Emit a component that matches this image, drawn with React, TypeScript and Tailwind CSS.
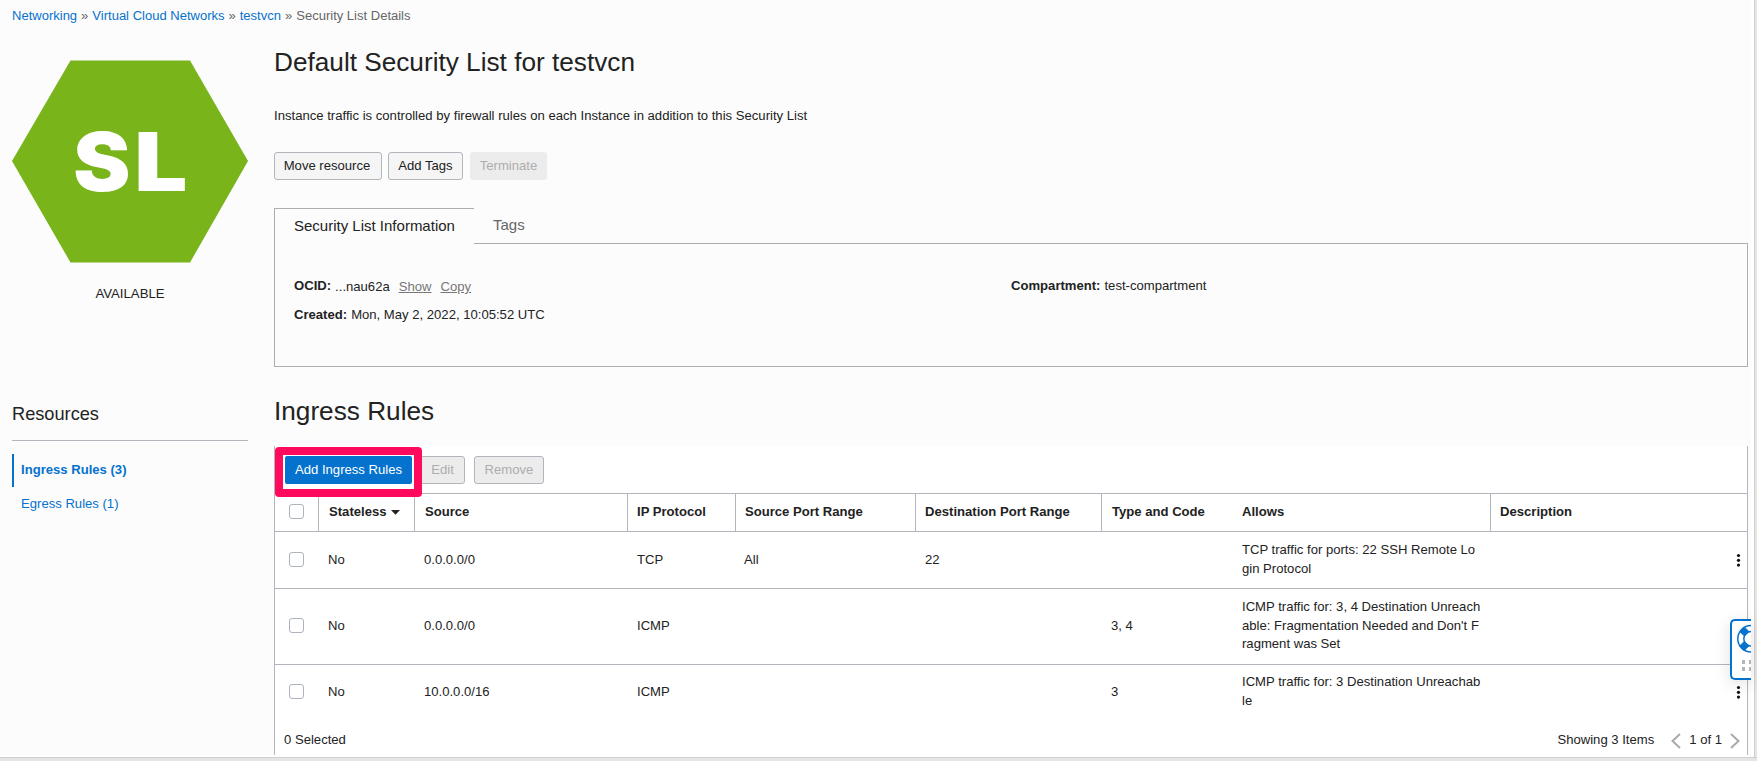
import React from "react";

const cols = "grid grid-cols-[44px_96px_213px_108px_180px_186px_130px_259px_1fr]";
const headBase = "flex items-center text-[13.1px] font-bold h-[37px] pb-px";
const headLine = " border-r border-[#b1b6bd]";

function Checkbox() {
  return <span className="mb-px block h-[15px] w-[15px] rounded-[3px] border border-[#aeb4bc] bg-white" />;
}

function Dots() {
  return (
    <svg width="5" height="14" viewBox="0 0 5 14" fill="#111">
      <circle cx="2.5" cy="2.5" r="1.6" />
      <circle cx="2.5" cy="7.3" r="1.6" />
      <circle cx="2.5" cy="12.1" r="1.6" />
    </svg>
  );
}

type Rule = { source: string; protocol: string; src: string; dst: string; code: string; allows: string[]; height: string };

const rules: Rule[] = [
  { source: "0.0.0.0/0", protocol: "TCP", src: "All", dst: "22", code: "", allows: ["TCP traffic for ports: 22 SSH Remote Lo", "gin Protocol"], height: "h-[57px] border-b" },
  { source: "0.0.0.0/0", protocol: "ICMP", src: "", dst: "", code: "3, 4", allows: ["ICMP traffic for: 3, 4 Destination Unreach", "able: Fragmentation Needed and Don't F", "ragment was Set"], height: "h-[76px] border-b pb-px" },
  { source: "10.0.0.0/16", protocol: "ICMP", src: "", dst: "", code: "3", allows: ["ICMP traffic for: 3 Destination Unreachab", "le"], height: "h-[54px]" },
];

function Row({ rule }: { rule: Rule }) {
  return (
    <div className={`${cols} ${rule.height} items-center border-[#b1b6bd] text-[13.1px]`}>
      <span className="pl-[14px]"><Checkbox /></span>
      <span className="pl-[9px]">No</span>
      <span className="pl-[9px]">{rule.source}</span>
      <span className="pl-[9px]">{rule.protocol}</span>
      <span className="pl-[8px]">{rule.src}</span>
      <span className="pl-[9px]">{rule.dst}</span>
      <span className="pl-[9px]">{rule.code}</span>
      <span className="pl-[10px] leading-[18.7px]">
        {rule.allows.map((line) => <span key={line} className="block whitespace-nowrap">{line}</span>)}
      </span>
      <span className="flex justify-end pr-[6px]"><Dots /></span>
    </div>
  );
}

export default function App() {
  return (
    <div className="relative flex h-[761px] w-[1757px] flex-col overflow-hidden bg-[#fcfcfc] font-['Liberation_Sans',Arial,sans-serif] text-[#222]">
      <nav className="flex h-[31px] shrink-0 items-center gap-1 pl-3 text-[13.03px] text-[#666]">
        <a className="text-[#0572ce]">Networking</a><span>»</span>
        <a className="text-[#0572ce]">Virtual Cloud Networks</a><span>»</span>
        <a className="text-[#0572ce]">testvcn</a><span>»</span>
        <span>Security List Details</span>
      </nav>

      <div className="flex h-[724px] shrink-0">
        <aside className="ml-3 flex w-[236px] shrink-0 flex-col">
          <svg className="mt-[29px] shrink-0" width="236" height="203" viewBox="0 0 236 203">
            <polygon points="58.5,0.5 178,0.5 236,101 178,202.5 58.5,202.5 0,101" fill="#78b41a" />
            <g fontFamily="Inter" fontWeight="900" fontSize="81" fill="#fff">
              <text transform="translate(61.3 131) scale(1.06 1)">S</text>
              <text transform="translate(122.3 131) scale(1.16 1)">L</text>
            </g>
          </svg>
          <div className="mt-[23px] text-center text-[13.2px] leading-[16px]">AVAILABLE</div>
          <h2 className="mt-[102px] text-[18.2px] leading-[20px]">Resources</h2>
          <div className="mt-[16px] border-t border-[#b1b6bd]" />
          <a className="mt-[13px] flex h-[33px] items-center border-l-2 border-[#0572ce] pb-[2px] pl-[7px] text-[13.1px] font-bold text-[#0572ce]">Ingress Rules (3)</a>
          <a className="flex h-[33px] items-center pl-[9px] text-[13.1px] text-[#0572ce]">Egress Rules (1)</a>
        </aside>

        <main className="ml-[26px] flex w-[1474px] shrink-0 flex-col">
          <h1 className="mt-[15px] text-[26.2px] leading-[32px]">Default Security List for testvcn</h1>
          <p className="mt-[30px] text-[13.12px] leading-[16px]">Instance traffic is controlled by firewall rules on each Instance in addition to this Security List</p>
          <div className="mt-[28px] flex text-[13.1px]">
            <button className="h-7 w-[108px] rounded-[3px] border border-[#b1b6bd] bg-[#f5f5f5] pr-[2px]">Move resource</button>
            <button className="ml-[6px] h-7 w-[75px] rounded-[3px] border border-[#b1b6bd] bg-[#f5f5f5]">Add Tags</button>
            <button className="ml-[7px] h-7 w-[77px] rounded-[3px] bg-[#ececec] text-[#adadad]">Terminate</button>
          </div>

          <div className="mt-[28px] flex h-[36px] text-[15px]">
            <div className="flex w-[200px] items-center border-l border-t border-[#adadad] pl-[19px] pb-px">Security List Information</div>
            <div className="flex flex-1 items-center border-b border-[#adadad] pl-[19px] text-[#666]">Tags</div>
          </div>
          <div className="flex h-[123px] border border-t-0 border-[#adadad] pl-[19px] pt-[34px] text-[13.1px] leading-[16px]">
            <div className="w-[717px]">
              <div className="flex">
                <b>OCID:</b>
                <span className="ml-1 pt-px">...nau62a</span>
                <a className="ml-[9px] pt-px text-[#777] underline">Show</a>
                <a className="ml-[9px] pt-px text-[#777] underline">Copy</a>
              </div>
              <div className="mt-[12px] flex"><b>Created:</b><span className="ml-1">Mon, May 2, 2022, 10:05:52 UTC</span></div>
            </div>
            <div className="flex"><b>Compartment:</b><span className="ml-[4px]">test-compartment</span></div>
          </div>

          <h2 className="mt-[28px] text-[26.2px] leading-[32px]">Ingress Rules</h2>
          <section className="mt-[19px] flex h-[309px] flex-col border-x border-[#b1b6bd] bg-white">
            <div className="relative flex h-[47px] shrink-0 pl-[10px] pt-[10px] text-[13.1px]">
              <button className="h-7 w-[127px] rounded-[2px] bg-[#0572ce] text-white">Add Ingress Rules</button>
              <button className="ml-[8px] h-7 w-[45px] rounded-[3px] border border-[#b1b6bd] bg-[#ececec] text-[#adadad]">Edit</button>
              <button className="ml-[9px] h-7 w-[70px] rounded-[3px] border border-[#b1b6bd] bg-[#ececec] text-[#adadad]">Remove</button>
              <div className="absolute left-0 top-[1px] z-10 h-[50px] w-[147px] rounded-[4px] border-8 border-[#ff0a5c]" />
            </div>
            <div className={`${cols} shrink-0 border-y border-[#b1b6bd]`}>
              <span className={headBase + headLine + " pl-[14px]"}><Checkbox /></span>
              <span className={headBase + headLine + " pl-[10px]"}>Stateless
                <svg className="ml-1" width="9" height="5"><path d="M0 0h9L4.5 4.8z" fill="#222" /></svg>
              </span>
              <span className={headBase + headLine + " pl-[10px]"}>Source</span>
              <span className={headBase + headLine + " pl-[9px]"}>IP Protocol</span>
              <span className={headBase + headLine + " pl-[9px]"}>Source Port Range</span>
              <span className={headBase + headLine + " pl-[9px]"}>Destination Port Range</span>
              <span className={headBase + " pl-[10px]"}>Type and Code</span>
              <span className={headBase + headLine + " pl-[10px]"}>Allows</span>
              <span className={headBase + " pl-[9px]"}>Description</span>
            </div>
            {rules.map((r) => <Row key={r.allows[0]} rule={r} />)}
            <div className="flex h-[36px] items-center pl-[9px] pr-[7px] pt-[5px] text-[13.1px]">
              <span>0 Selected</span>
              <span className="ml-auto">Showing 3 Items</span>
              <svg className="ml-[17px] mt-[2px]" width="10" height="16" fill="none" stroke="#aaa" strokeWidth="2"><path d="M9 1L1.5 8L9 15" /></svg>
              <span className="mx-[8px]">1 of 1</span>
              <svg className="mt-[2px]" width="10" height="16" fill="none" stroke="#aaa" strokeWidth="2"><path d="M1 1L8.5 8L1 15" /></svg>
            </div>
          </section>
        </main>
      </div>
      <div className="h-[2px] shrink-0 bg-white" />
      <div className="h-[4px] shrink-0 border-t border-[#cfcfcf] bg-[#e6e5e3]" />
      <div className="absolute right-0 top-0 h-[757px] w-[6px] border-l-[3px] border-white bg-[#e6e5e3]">
        <div className="h-full w-px bg-[#d0d0d0]" />
      </div>

      <div className="absolute left-[1730px] top-[619px] h-[61px] w-[21px] overflow-hidden rounded-l-[5px] border-2 border-r-0 border-[#0572ce] bg-white shadow-[0_4px_16px_rgba(0,0,0,0.12)]">
        <svg width="19" height="57" viewBox="0 0 19 57">
          <g fill="none" stroke="#0572ce" strokeWidth="1.5">
            <circle cx="19" cy="17.8" r="13.2" />
            <circle cx="19" cy="17.8" r="7.2" />
          </g>
          <path d="M12 5.8L17 10.5L12.5 15L7.5 10.5zM12.5 20.3L17 25L12 29.7L7.5 25z" fill="#0572ce" stroke="#0572ce" strokeWidth="0.8" />
          <path d="M10 39h3v4h-3zM17 39h2v4h-2zM10 46h3v4h-3zM17 46h2v4h-2z" fill="#b1b6bd" />
        </svg>
      </div>
    </div>
  );
}
